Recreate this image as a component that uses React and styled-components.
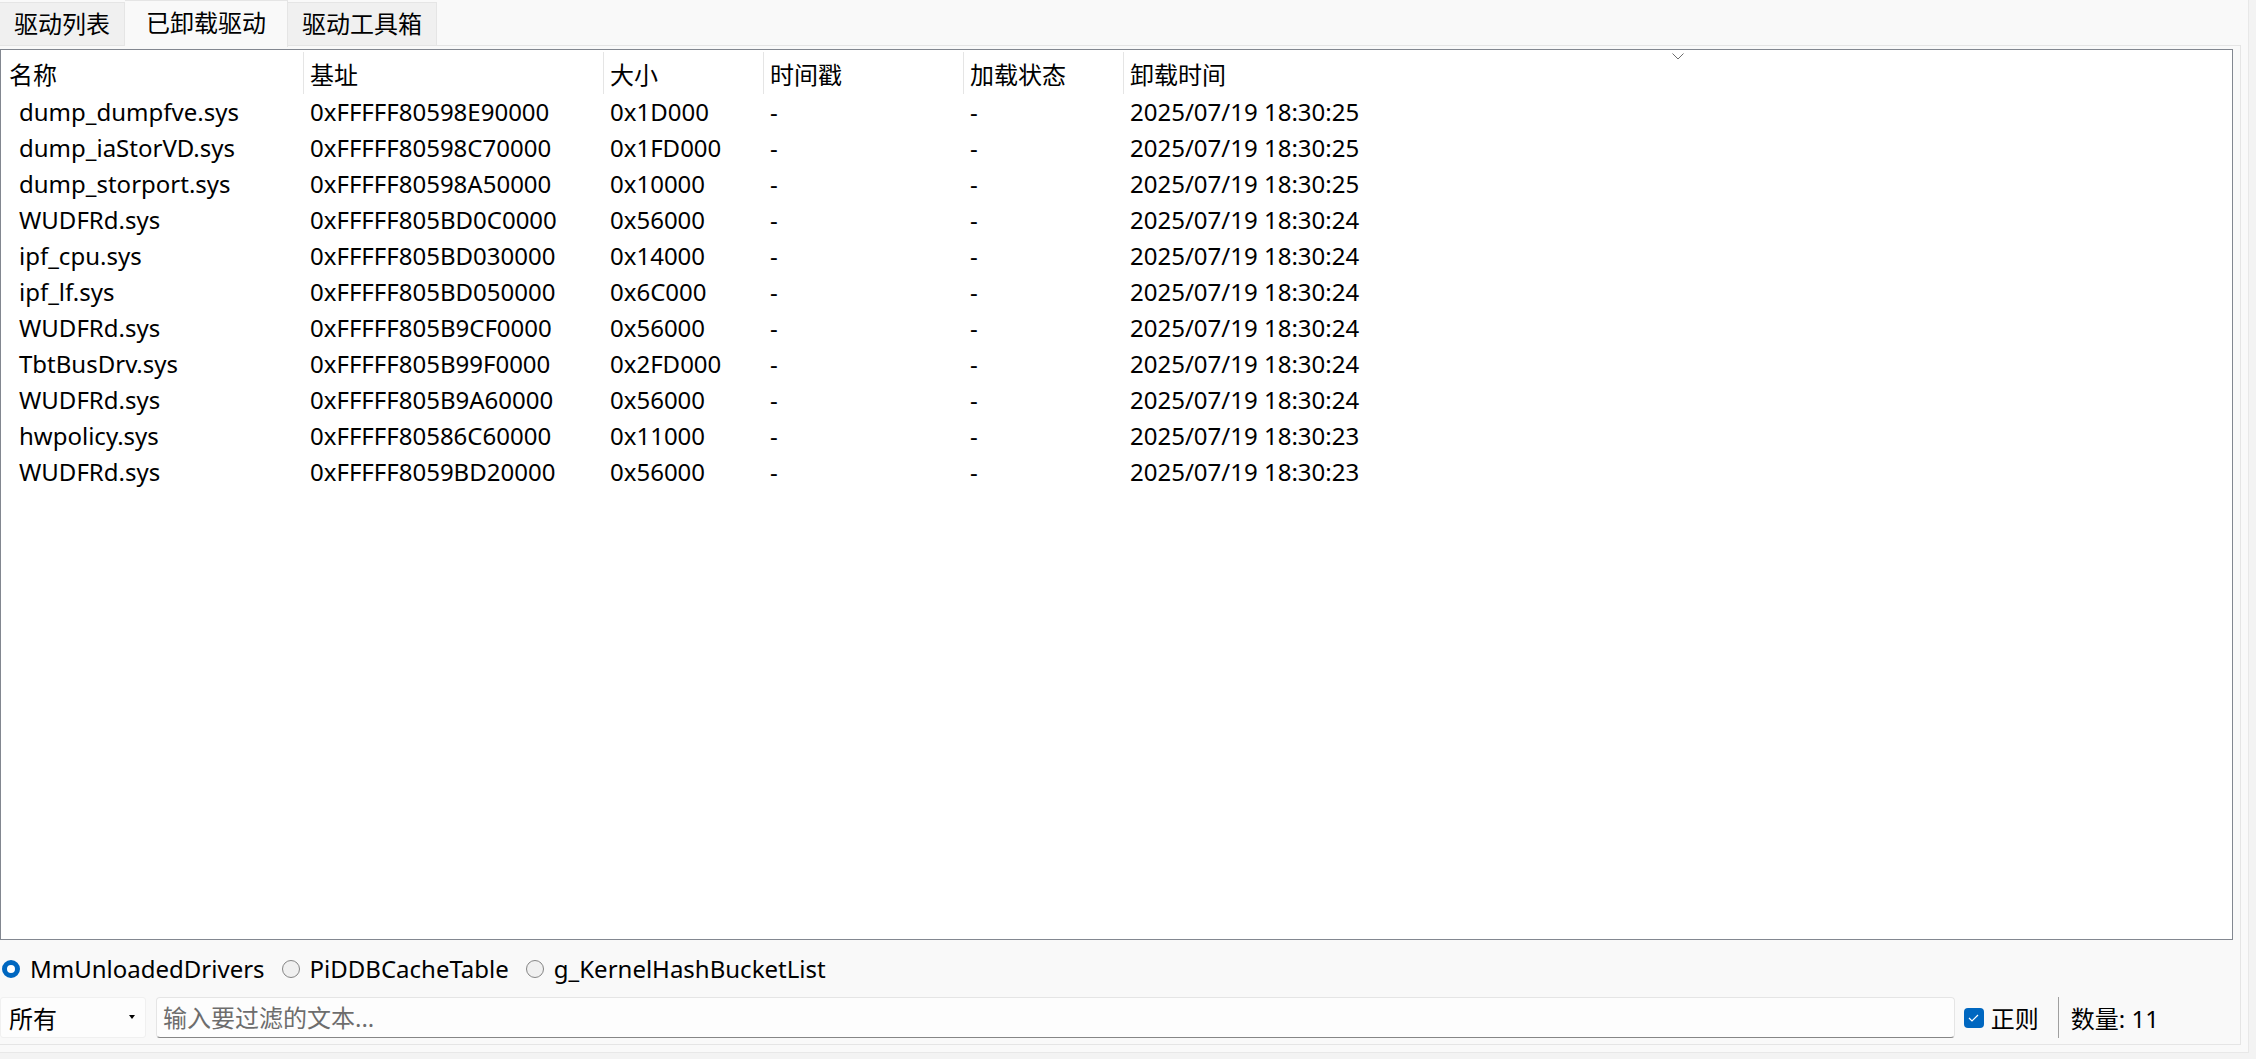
import React from 'react';
import styled, { createGlobalStyle } from 'styled-components';

/* Data ---------------------------*/
const columns = ['名称', '基址', '大小', '时间戳', '加载状态', '卸载时间'];

const drivers = [
    ['dump_dumpfve.sys', '0xFFFFF80598E90000', '0x1D000', '2025/07/19 18:30:25'],
    ['dump_iaStorVD.sys', '0xFFFFF80598C70000', '0x1FD000', '2025/07/19 18:30:25'],
    ['dump_storport.sys', '0xFFFFF80598A50000', '0x10000', '2025/07/19 18:30:25'],
    ['WUDFRd.sys', '0xFFFFF805BD0C0000', '0x56000', '2025/07/19 18:30:24'],
    ['ipf_cpu.sys', '0xFFFFF805BD030000', '0x14000', '2025/07/19 18:30:24'],
    ['ipf_lf.sys', '0xFFFFF805BD050000', '0x6C000', '2025/07/19 18:30:24'],
    ['WUDFRd.sys', '0xFFFFF805B9CF0000', '0x56000', '2025/07/19 18:30:24'],
    ['TbtBusDrv.sys', '0xFFFFF805B99F0000', '0x2FD000', '2025/07/19 18:30:24'],
    ['WUDFRd.sys', '0xFFFFF805B9A60000', '0x56000', '2025/07/19 18:30:24'],
    ['hwpolicy.sys', '0xFFFFF80586C60000', '0x11000', '2025/07/19 18:30:23'],
    ['WUDFRd.sys', '0xFFFFF8059BD20000', '0x56000', '2025/07/19 18:30:23'],
];

const tabs = ['驱动列表', '已卸载驱动', '驱动工具箱'];
const sources = ['MmUnloadedDrivers', 'PiDDBCacheTable', 'g_KernelHashBucketList'];

const App = () => {
    return (
        <>
            <GlobalStyle />
            <Window>
                <TabStrip>
                    {tabs.map((t, i) => (
                        <Tab key={t} active={i === 1}>{t}</Tab>
                    ))}
                </TabStrip>

                <Panel>
                    <ListBox>
                        <HeaderRow>
                            {columns.map((c, i) => (
                                <HeaderCell key={c} first={i === 0}>{c}</HeaderCell>
                            ))}
                            <SortArrow width="12" height="7" viewBox="0 0 12 7">
                                <path d="M0.5 0.5 L6 6 L11.5 0.5" fill="none" stroke="#6d6d6d" strokeWidth="1" />
                            </SortArrow>
                        </HeaderRow>
                        {drivers.map((d, i) => (
                            <Row key={i}>
                                <Cell first>{d[0]}</Cell>
                                <Cell>{d[1]}</Cell>
                                <Cell>{d[2]}</Cell>
                                <Cell>-</Cell>
                                <Cell>-</Cell>
                                <Cell>{d[3]}</Cell>
                            </Row>
                        ))}
                    </ListBox>

                    <RadioRow>
                        {sources.map((s, i) => (
                            <RadioItem key={s}>
                                <RadioDot checked={i === 0} />
                                {s}
                            </RadioItem>
                        ))}
                    </RadioRow>

                    <FilterRow>
                        <Combo>
                            所有
                            <ComboArrow />
                        </Combo>
                        <FilterInput placeholder="输入要过滤的文本..." />
                        <CheckLabel>
                            <CheckBox>
                                <svg width="11" height="8" viewBox="0 0 11 8">
                                    <path d="M1 4 L4 7 L10 1" fill="none" stroke="#fff" strokeWidth="1.2" />
                                </svg>
                            </CheckBox>
                            正则
                        </CheckLabel>
                        <Divider />
                        <Count>数量: 11</Count>
                    </FilterRow>
                </Panel>
            </Window>
        </>
    );
}

export default App;

/* Styles ---------------------------*/
const GlobalStyle = createGlobalStyle`
    html, body {
        margin: 0;
        padding: 0;
        background: #f3f3f3;
    }
    body {
        font-family: "Noto Sans", "Noto Sans CJK SC", sans-serif;
        font-size: 24px;
        color: #000;
    }
`;

const Window = styled.div`
    width: 2248px;
    height: 1052px;
    background: #f9f9f9;
    border-right: 1px solid #e8e8e8;
    border-bottom: 1px solid #e8e8e8;
    display: flex;
    flex-direction: column;
`;

const TabStrip = styled.div`
    height: 45px;
    display: flex;
    align-items: flex-start;
    position: relative;
    z-index: 1;
`;

const Tab = styled.div`
    box-sizing: border-box;
    height: ${(p) => (p.active ? '47px' : '43px')};
    margin-top: ${(p) => (p.active ? '0' : '2px')};
    padding: 0 ${(p) => (p.active ? '21px' : '14px')};
    padding-bottom: ${(p) => (p.active ? '2px' : '0')};
    display: flex;
    align-items: center;
    background: ${(p) => (p.active ? '#f9f9f9' : '#f0f0f0')};
    border-top: 1px solid #e5e5e5;
    border-right: 1px solid #e5e5e5;
    line-height: 1;
    white-space: nowrap;

    &:first-child {
        width: 125px;
    }
`;

const Panel = styled.div`
    width: 2241px;
    box-sizing: border-box;
    flex: 1;
    border-top: 1px solid #e5e5e5;
    border-right: 1px solid #e5e5e5;
    border-bottom: 1px solid #e5e5e5;
    margin-bottom: 7px;
    padding: 3px 7px 6px 0;
    display: flex;
    flex-direction: column;
`;

const ListBox = styled.div`
    height: 891px;
    box-sizing: border-box;
    border: 1px solid #828790;
    background: #fff;
    position: relative;
`;

const gridCols = '302px 300px 160px 200px 160px 1fr';

const HeaderRow = styled.div`
    display: grid;
    grid-template-columns: ${gridCols};
    height: 44px;
    position: relative;
`;

const HeaderCell = styled.div`
    display: flex;
    align-items: center;
    padding-left: ${(p) => (p.first ? '8px' : '6px')};
    margin-top: 2px;
    border-left: ${(p) => (p.first ? 'none' : '1px solid #e5e5e5')};
    white-space: nowrap;
`;

const SortArrow = styled.svg`
    position: absolute;
    left: 1671px;
    top: 3px;
`;

const Row = styled.div`
    display: grid;
    grid-template-columns: ${gridCols};
    height: 36px;
    align-items: center;
`;

const Cell = styled.div`
    padding-left: ${(p) => (p.first ? '18px' : '7px')};
    white-space: nowrap;
    line-height: 36px;
`;

const RadioRow = styled.div`
    height: 57px;
    display: flex;
    align-items: center;
    padding-left: 2px;
    gap: 17px;
`;

const RadioItem = styled.label`
    display: flex;
    align-items: center;
    gap: 10px;
    white-space: nowrap;
`;

const RadioDot = styled.span`
    box-sizing: border-box;
    flex: none;
    width: 18px;
    height: 18px;
    border-radius: 50%;
    background: ${(p) => (p.checked ? '#fff' : '#f0f0f0')};
    border: ${(p) => (p.checked ? '5px solid #0067c0' : '1px solid #858585')};
`;

const FilterRow = styled.div`
    height: 41px;
    display: flex;
    align-items: stretch;
    padding-right: 74px;
`;

const Combo = styled.div`
    width: 146px;
    flex: none;
    box-sizing: border-box;
    background: #fdfdfd;
    border: 1px solid #f0f0f0;
    border-radius: 3px;
    padding-left: 8px;
    display: flex;
    align-items: center;
    position: relative;
    margin-right: 10px;
`;

const ComboArrow = styled.span`
    position: absolute;
    left: 128px;
    top: 17px;
    width: 0;
    height: 0;
    border-left: 3px solid transparent;
    border-right: 3px solid transparent;
    border-top: 4px solid #000;
`;

const FilterInput = styled.input`
    flex: 1;
    min-width: 0;
    box-sizing: border-box;
    font-family: inherit;
    font-size: 24px;
    background: #fdfdfd;
    border: 1px solid #e5e5e5;
    border-bottom: 1px solid #868686;
    border-radius: 4px;
    padding: 0 6px;
    outline: none;

    &::placeholder {
        color: #6d6d6d;
    }
`;

const CheckLabel = styled.label`
    display: flex;
    align-items: center;
    gap: 7px;
    margin-left: 9px;
    white-space: nowrap;
`;

const CheckBox = styled.span`
    flex: none;
    width: 20px;
    height: 20px;
    border-radius: 4px;
    background: #0067c0;
    display: flex;
    align-items: center;
    justify-content: center;
`;

const Divider = styled.span`
    flex: none;
    width: 1px;
    background: #a0a0a0;
    margin: 0 12px 0 19px;
`;

const Count = styled.div`
    display: flex;
    align-items: center;
    white-space: nowrap;
`;
